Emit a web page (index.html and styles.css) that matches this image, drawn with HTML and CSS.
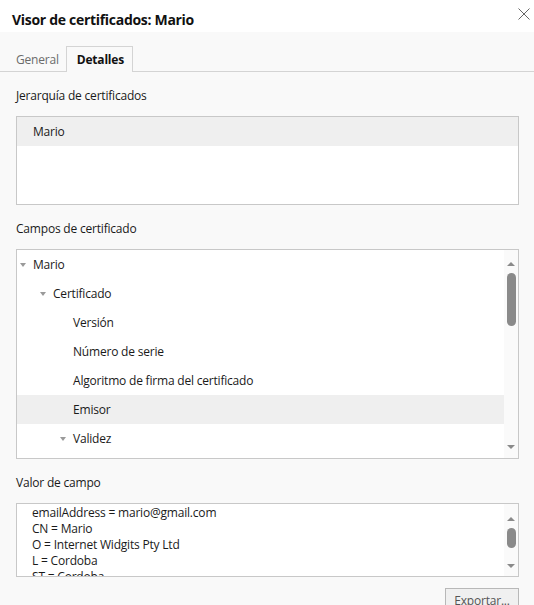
FILE: index.html
```html
<!DOCTYPE html>
<html lang="es">
<head>
<meta charset="utf-8">
<title>Visor de certificados: Mario</title>
<link rel="stylesheet" href="styles.css">
</head>
<body>
<div class="dialog">
  <div class="titlebar">
    <span class="title">Visor de certificados: Mario</span>
    <svg class="close" width="12" height="12" viewBox="0 0 12 12"><path d="M0.5 0.5L11.5 11.5M11.5 0.5L0.5 11.5" stroke="#666" stroke-width="1" fill="none"/></svg>
  </div>
  <div class="tabs">
    <span class="tab">General</span>
    <span class="tab active">Detalles</span>
  </div>
  <div class="content">
    <div class="label lbl-1">Jerarquía de certificados</div>
    <div class="box hier">
      <div class="hrow selected">Mario</div>
    </div>

    <div class="label lbl-2">Campos de certificado</div>
    <div class="box fields">
      <div class="list">
        <div class="row lvl0"><span class="tri"></span>Mario</div>
        <div class="row lvl1"><span class="tri"></span>Certificado</div>
        <div class="row lvl2">Versión</div>
        <div class="row lvl2">Número de serie</div>
        <div class="row lvl2">Algoritmo de firma del certificado</div>
        <div class="row lvl2 selected">Emisor</div>
        <div class="row lvl1b"><span class="tri"></span>Validez</div>
      </div>
      <div class="scrollbar sb-fields">
        <span class="arrow up"></span>
        <span class="thumb"></span>
        <span class="spacer"></span>
        <span class="arrow down"></span>
      </div>
    </div>

    <div class="label lbl-3">Valor de campo</div>
    <div class="box value">
      <div class="vtext">
        <div class="vline">emailAddress = mario@gmail.com</div>
        <div class="vline">CN = Mario</div>
        <div class="vline">O = Internet Widgits Pty Ltd</div>
        <div class="vline">L = Cordoba</div>
        <div class="vline">ST = Cordoba</div>
      </div>
      <div class="scrollbar sb-value">
        <span class="arrow up"></span>
        <span class="thumb"></span>
        <span class="spacer"></span>
        <span class="arrow down"></span>
      </div>
    </div>

    <div class="actions">
      <button class="btn">Exportar...</button>
    </div>
  </div>
</div>
</body>
</html>
```

FILE: styles.css
```css
html, body {
  margin: 0;
  padding: 0;
}
body {
  background: #f9f9f9;
  font-family: "Open Sans", "Noto Sans", sans-serif;
  font-size: 12px;
  letter-spacing: -0.2px;
  color: #1a1a1a;
  overflow: hidden;
  width: 534px;
  height: 605px;
}
.titlebar {
  height: 32px;
  background: #ffffff;
  display: flex;
  align-items: flex-end;
  padding: 0 4px 0 12px;
  position: relative;
}
.title {
  font-weight: 700;
  font-size: 14px;
  line-height: 20px;
  color: #111;
  padding-bottom: 2px;
  letter-spacing: -0.3px;
}
.close {
  position: absolute;
  right: 4px;
  top: 8px;
}
.tabs {
  height: 40px;
  box-sizing: border-box;
  border-bottom: 1px solid #d4d4d4;
  display: flex;
  align-items: flex-end;
  padding-left: 10px;
}
.tab {
  height: 25px;
  line-height: 25px;
  padding: 0 5px 0 6px;
  color: #6b6b6b;
  margin-bottom: -1px;
}
.tab.active {
  font-weight: 700;
  color: #111;
  width: 67px;
  box-sizing: border-box;
  padding: 0 0 0 10px;
  border: 1px solid #d4d4d4;
  border-bottom: none;
  background: #f9f9f9;
  height: 26px;
  margin-left: 2px;
}
.content {
  padding: 0 15px 0 16px;
}
.label {
  line-height: 16px;
  margin-top: 16px;
  margin-bottom: 12px;
}
.box {
  border: 1px solid #c8c8c8;
  background: #ffffff;
  box-sizing: border-box;
}
.hier {
  height: 89px;
}
.hrow {
  height: 29px;
  line-height: 29px;
  padding-left: 16px;
}
.selected {
  background: #efefef;
}
.fields {
  height: 210px;
  display: flex;
}
.list {
  flex: 1;
  overflow: clip;
}
.row {
  height: 29px;
  line-height: 29px;
  display: flex;
  align-items: center;
  white-space: nowrap;
}
.lvl0 { padding-left: 3px; }
.lvl1 { padding-left: 23px; }
.lvl1b { padding-left: 43px; }
.lvl2 { padding-left: 56px; }
.tri {
  width: 0;
  height: 0;
  border-left: 3.5px solid transparent;
  border-right: 3.5px solid transparent;
  border-top: 4px solid #9a9a9a;
  margin-right: 7px;
  margin-top: 1px;
}
.scrollbar {
  width: 14px;
  flex: none;
  background: #fafafa;
  display: flex;
  flex-direction: column;
  align-items: center;
}
.arrow {
  width: 0;
  height: 0;
  border-left: 4px solid transparent;
  border-right: 4px solid transparent;
}
.arrow.up {
  border-bottom: 4px solid #8a8a8a;
}
.arrow.down {
  border-top: 4px solid #8a8a8a;
}
.thumb {
  width: 9px;
  background: #8a8a8a;
  border-radius: 5px;
}
.spacer {
  flex: 1;
}
.sb-fields .arrow.up { margin-top: 12px; }
.sb-fields .thumb { margin-top: 7px; height: 53px; }
.sb-fields .arrow.down { margin-bottom: 9px; }
.value {
  height: 74px;
  display: flex;
  overflow: clip;
}
.vtext {
  flex: 1;
  min-width: 0;
  margin-left: 15px;
  line-height: 16px;
  padding-top: 1px;
  overflow: clip;
}
.vline {
  white-space: nowrap;
}
.sb-value .arrow.up { margin-top: 13px; }
.sb-value .thumb { margin-top: 7px; height: 20px; }
.sb-value .arrow.down { margin-bottom: 8px; }
.actions {
  display: flex;
  justify-content: flex-end;
  margin-top: 11px;
}
.btn {
  font-family: inherit;
  font-size: 12px;
  letter-spacing: -0.2px;
  color: #555;
  background: #f0f0f0;
  border: 1px solid #b8b8b8;
  height: 24px;
  width: 74px;
  padding: 0;
}
```
